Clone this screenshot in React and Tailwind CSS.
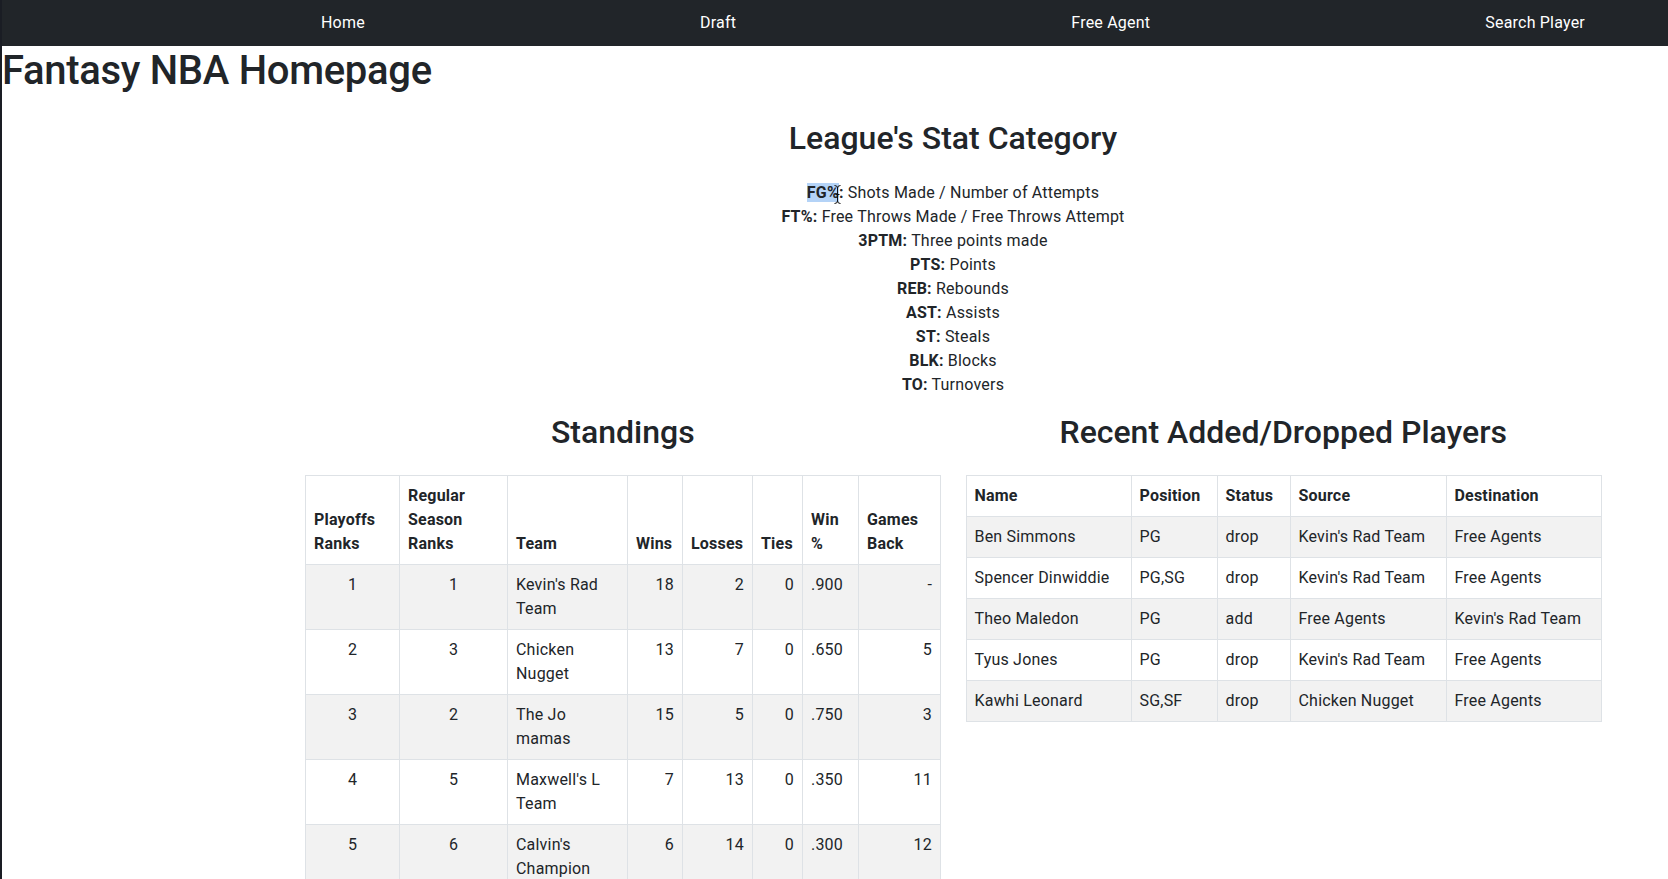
import React from "react";

const standings = [
  ["1", "1", "Kevin's Rad Team", "18", "2", "0", ".900", "-"],
  ["2", "3", "Chicken Nugget", "13", "7", "0", ".650", "5"],
  ["3", "2", "The Jo mamas", "15", "5", "0", ".750", "3"],
  ["4", "5", "Maxwell's L Team", "7", "13", "0", ".350", "11"],
  ["5", "6", "Calvin's Champion", "6", "14", "0", ".300", "12"],
];

const moves = [
  ["Ben Simmons", "PG", "drop", "Kevin's Rad Team", "Free Agents"],
  ["Spencer Dinwiddie", "PG,SG", "drop", "Kevin's Rad Team", "Free Agents"],
  ["Theo Maledon", "PG", "add", "Free Agents", "Kevin's Rad Team"],
  ["Tyus Jones", "PG", "drop", "Kevin's Rad Team", "Free Agents"],
  ["Kawhi Leonard", "SG,SF", "drop", "Chicken Nugget", "Free Agents"],
];

const stats = [
  ["FT%:", "Free Throws Made / Free Throws Attempt"],
  ["3PTM:", "Three points made"],
  ["PTS:", "Points"],
  ["REB:", "Rebounds"],
  ["AST:", "Assists"],
  ["ST:", "Steals"],
  ["BLK:", "Blocks"],
  ["TO:", "Turnovers"],
];

const sWidths = ["w-[94px]", "w-[108px]", "w-[120px]", "w-[55px]", "w-[70px]", "w-[50px]", "w-[56px]", "w-[82px]"];
const sAlign = ["text-center", "text-center", "text-left", "text-right", "text-right", "text-right", "text-left", "text-right"];
const mWidths = ["w-[165px]", "w-[86px]", "w-[73px]", "w-[156px]", "w-[155px]"];

export default function App() {
  return (
    <div
      className="min-h-[879px] bg-white text-[#212529] border-l-2 border-[#1a1d24]"
      style={{ fontFamily: "Roboto, Inter, 'Noto Sans', 'Liberation Sans', sans-serif" }}
    >
      <nav className="h-[46px] bg-[#212529] flex items-center justify-between pl-[319px] pr-[83px] text-white text-[16px] tracking-[0.2px]">
        <span>Home</span>
        <span>Draft</span>
        <span>Free Agent</span>
        <span>Search Player</span>
      </nav>

      <h1 className="text-[40px] leading-[48px] font-medium m-0 pt-px tracking-[-0.3px]">Fantasy NBA Homepage</h1>

      <div className="ml-[291px] w-[1320px]">
        <h2 className="mt-[24px] text-[32px] leading-[38px] font-medium text-center">League's Stat Category</h2>
        <div className="mt-[24px] text-center text-[16px] leading-[24px] tracking-[0.2px]">
          <div>
            <span className="relative">
              <b className="bg-[#b4d3f7]">FG%</b>
              <b>:</b>
              <svg className="absolute left-[27px] top-[2px]" width="7" height="19" viewBox="0 0 7 19">
                <path d="M0.5 0.5 Q3.5 0.5 3.5 3 L3.5 16 Q3.5 18.5 0.5 18.5 M6.5 0.5 Q3.5 0.5 3.5 3 M3.5 16 Q3.5 18.5 6.5 18.5 M1.5 9.5 H5.5" stroke="#111" strokeWidth="1" fill="none" />
              </svg>
            </span>{" "}
            Shots Made / Number of Attempts
          </div>
          {stats.map(([k, v]) => (
            <div key={k}>
              <b>{k}</b> {v}
            </div>
          ))}
        </div>

        <div className="mt-[16px] grid grid-cols-2 gap-[25px] px-[12px]">
          <div>
            <h2 className="text-[32px] leading-[38px] font-medium text-center">Standings</h2>
            <table className="mt-[24px] w-[635px] table-fixed border-collapse text-[16px] leading-[24px] tracking-[0.2px]">
              <thead>
                <tr>
                  {["Playoffs Ranks", "Regular Season Ranks", "Team", "Wins", "Losses", "Ties", "Win %", "Games Back"].map((h, i) => (
                    <th key={h} className={`${sWidths[i]} border border-[#dee2e6] p-2 text-left align-bottom font-bold`}>
                      {h}
                    </th>
                  ))}
                </tr>
              </thead>
              <tbody>
                {standings.map((r, ri) => (
                  <tr key={ri} className={ri % 2 === 0 ? "bg-[#f2f2f2]" : "bg-white"}>
                    {r.map((c, ci) => (
                      <td key={ci} className={`border border-[#dee2e6] p-2 align-top ${sAlign[ci]}`}>
                        {c}
                      </td>
                    ))}
                  </tr>
                ))}
              </tbody>
            </table>
          </div>

          <div>
            <h2 className="text-[32px] leading-[38px] font-medium text-center">Recent Added/Dropped Players</h2>
            <table className="mt-[24px] w-[635px] table-fixed border-collapse text-[16px] leading-[24px] tracking-[0.2px]">
              <thead>
                <tr>
                  {["Name", "Position", "Status", "Source", "Destination"].map((h, i) => (
                    <th key={h} className={`${mWidths[i]} border border-[#dee2e6] p-2 text-left align-bottom font-bold whitespace-nowrap`}>
                      {h}
                    </th>
                  ))}
                </tr>
              </thead>
              <tbody>
                {moves.map((r, ri) => (
                  <tr key={ri} className={ri % 2 === 0 ? "bg-[#f2f2f2]" : "bg-white"}>
                    {r.map((c, ci) => (
                      <td key={ci} className="border border-[#dee2e6] p-2 align-top whitespace-nowrap">
                        {c}
                      </td>
                    ))}
                  </tr>
                ))}
              </tbody>
            </table>
          </div>
        </div>
      </div>
    </div>
  );
}
